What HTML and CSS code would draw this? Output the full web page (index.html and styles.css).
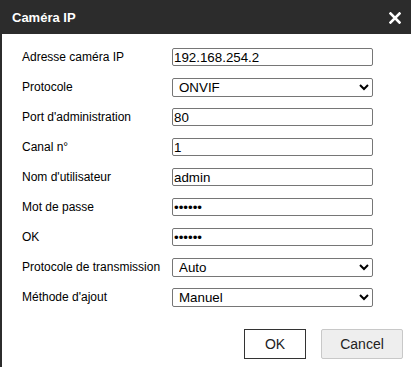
FILE: index.html
```html
<!DOCTYPE html>
<html lang="fr">
<head>
    <meta charset="UTF-8">
    <meta name="viewport" content="width=device-width, initial-scale=1.0">
    <title>Caméra IP</title>
    <link rel="stylesheet" href="styles.css">
</head>
<body>
    <div class="dialog">
        <div class="header">
            <span class="title">Caméra IP</span>
            <svg class="close" width="12" height="12" viewBox="0 0 12 12">
                <path d="M1.5 1.5 L10.5 10.5 M10.5 1.5 L1.5 10.5" stroke="#fff" stroke-width="2.6" stroke-linecap="square"/>
            </svg>
        </div>
        <div class="body">
            <div class="form">
                <label>Adresse caméra IP</label>
                <input type="text" value="192.168.254.2">
                <label>Protocole</label>
                <select><option>ONVIF</option></select>
                <label>Port d'administration</label>
                <input type="text" value="80">
                <label>Canal n°</label>
                <input type="text" value="1">
                <label>Nom d'utilisateur</label>
                <input type="text" value="admin">
                <label>Mot de passe</label>
                <input type="password" value="123456">
                <label>OK</label>
                <input type="password" value="123456">
                <label>Protocole de transmission</label>
                <select><option>Auto</option></select>
                <label>Méthode d'ajout</label>
                <select><option>Manuel</option></select>
            </div>
            <div class="actions">
                <button class="btn btn-ok">OK</button>
                <button class="btn btn-cancel">Cancel</button>
            </div>
        </div>
    </div>
</body>
</html>
```
FILE: styles.css
```css
body { margin: 0; font-family: "Liberation Sans", Arial, sans-serif; background: #fff; }
.dialog { width: 411px; height: 367px; display: flex; flex-direction: column; }
.header { height: 34px; background: #2c2c2c; display: flex; align-items: center; justify-content: space-between; padding: 0 10px 0 12px; box-sizing: border-box; }
.title { color: #fff; font-weight: bold; font-size: 13px; }
.close { display: block; margin-top: 1px; }
.body { flex: 1; border-left: 2px solid #2c2c2c; padding: 8px 0 0 20px; }
.form { display: grid; grid-template-columns: 150px 201px; grid-auto-rows: 30px; align-items: center; }
label { font-size: 12px; color: #000; }
input, select { font-family: "Liberation Sans", Arial, sans-serif; font-size: 13.33px; color: #000; box-sizing: border-box; width: 201px; border: 1px solid #767676; border-radius: 2px; background: #fff; margin: 0; }
input { height: 18px; padding: 0 1px; }
select { height: 19px; padding: 0 0 0 2px; }
.actions { display: flex; justify-content: flex-end; gap: 15px; margin-top: 17px; padding-right: 8px; }
.btn { font-family: "Liberation Sans", Arial, sans-serif; font-size: 14px; height: 30px; color: #222; cursor: pointer; }
.btn-ok { width: 62px; background: #fff; border: 1px solid #333; }
.btn-cancel { width: 82px; background: #eee; border: 1px solid #c8c8c8; border-radius: 2px; }
```
